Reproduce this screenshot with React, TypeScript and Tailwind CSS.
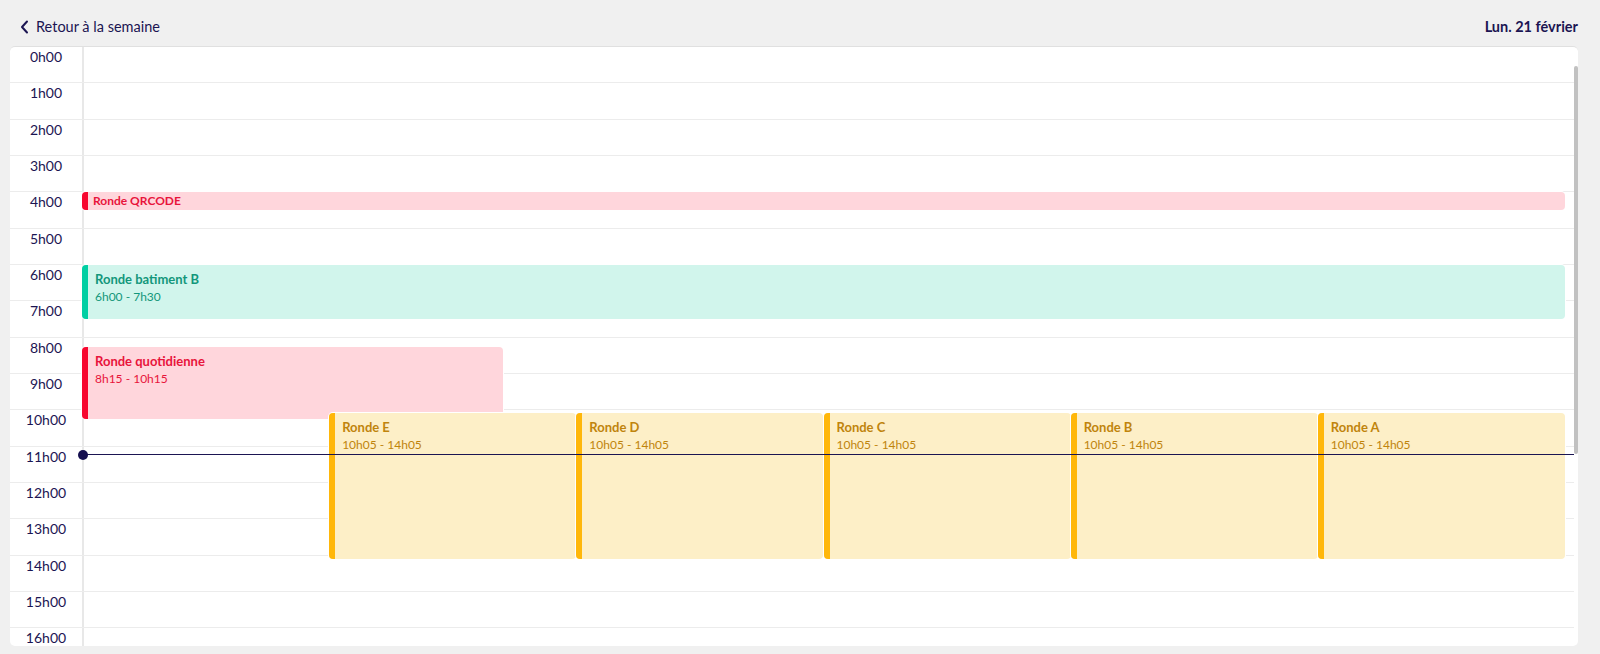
import React from "react";

const HOUR = 36.33;
const COLS = 1483;

type Tone = "red" | "teal" | "yellow";

type CalEvent = {
  title: string;
  time?: string;
  start: number;
  end: number;
  left: number;
  width: number;
  tone: Tone;
};

const toneClasses: Record<Tone, { box: string; bar: string; text: string }> = {
  red: { box: "bg-[#ffd6dc]", bar: "bg-[#f7072f]", text: "text-[#e8143b]" },
  teal: { box: "bg-[#d1f5ec]", bar: "bg-[#00cfa3]", text: "text-[#13977b]" },
  yellow: { box: "bg-[#fdefc7]", bar: "bg-[#ffb70a]", text: "text-[#c0840c]" },
};

const sixth = COLS / 6;

const events: CalEvent[] = [
  { title: "Ronde QRCODE", start: 4, end: 4.5, left: 0, width: COLS, tone: "red" },
  { title: "Ronde batiment B", time: "6h00 - 7h30", start: 6, end: 7.5, left: 0, width: COLS, tone: "teal" },
  { title: "Ronde quotidienne", time: "8h15 - 10h15", start: 8.25, end: 10.25, left: 0, width: 421, tone: "red" },
  { title: "Ronde E", time: "10h05 - 14h05", start: 10 + 5 / 60, end: 14 + 5 / 60, left: sixth * 1, width: sixth, tone: "yellow" },
  { title: "Ronde D", time: "10h05 - 14h05", start: 10 + 5 / 60, end: 14 + 5 / 60, left: sixth * 2, width: sixth, tone: "yellow" },
  { title: "Ronde C", time: "10h05 - 14h05", start: 10 + 5 / 60, end: 14 + 5 / 60, left: sixth * 3, width: sixth, tone: "yellow" },
  { title: "Ronde B", time: "10h05 - 14h05", start: 10 + 5 / 60, end: 14 + 5 / 60, left: sixth * 4, width: sixth, tone: "yellow" },
  { title: "Ronde A", time: "10h05 - 14h05", start: 10 + 5 / 60, end: 14 + 5 / 60, left: sixth * 5, width: sixth, tone: "yellow" },
];

const hours = Array.from({ length: 17 }, (_, i) => i);

function EventBlock({ ev }: { ev: CalEvent }) {
  const t = toneClasses[ev.tone];
  const compact = !ev.time;
  return (
    <div
      className={`absolute flex overflow-hidden rounded-[4px] ring-1 ring-white ${t.box}`}
      style={{
        top: ev.start * HOUR,
        height: (ev.end - ev.start) * HOUR,
        left: ev.left,
        width: ev.width,
      }}
    >
      <div className={`w-[6px] shrink-0 ${t.bar}`} />
      {compact ? (
        <div className={`flex items-center pl-[5px] text-[12px] font-bold leading-[18px] ${t.text}`}>
          {ev.title}
        </div>
      ) : (
        <div className={`flex flex-col pl-[7px] pt-[5px] text-[12px] leading-[18px] ${t.text}`}>
          <span className="text-[13px] font-bold">{ev.title}</span>
          <span>{ev.time}</span>
        </div>
      )}
    </div>
  );
}

export default function App() {
  return (
    <div className="h-[654px] w-full overflow-hidden bg-[#f0f0f0] pl-[10px] pr-[22px] font-['Lato',sans-serif] text-[#1b1552]">
      <header className="flex h-[46px] items-center justify-between pt-2">
        <button className="flex items-center gap-[7px] pl-[10px] text-[14.5px]">
          <svg width="9" height="14" viewBox="0 0 9 14" fill="none">
            <path d="M7 1.5 L2 7 L7 12.5" stroke="#1b1552" strokeWidth="2" strokeLinecap="round" strokeLinejoin="round" />
          </svg>
          <span>Retour à la semaine</span>
        </button>
        <span className="text-[14.5px] font-bold">Lun. 21 février</span>
      </header>

      <div className="relative h-[600px] overflow-hidden rounded-[5px] border-t border-[#e0e0e0] bg-white">
        <div className="flex">
          <div className="relative w-[1564px]">
            {hours.map((h) => (
              <div key={h} className="flex h-[36.33px] border-b border-[#ececec]">
                <div className="w-[72px] shrink-0 text-center text-[14px] leading-5">{h}h00</div>
                <div className="flex-1 border-l-2 border-[#e8e8e8]" />
              </div>
            ))}

            <div className="absolute left-[72px] top-0 w-[1483px]">
              {events.map((ev) => (
                <EventBlock key={ev.title} ev={ev} />
              ))}
            </div>

            {/* now indicator */}
            <div className="absolute left-[73px] right-0 top-[407px] h-px bg-[#1b1552]" />
            <div className="absolute left-[68px] top-[402.5px] h-[10px] w-[10px] rounded-full bg-[#150f50]" />
          </div>
          <div className="w-[4px]" />
        </div>

        {/* scrollbar thumb */}
        <div className="absolute right-0 top-[19px] h-[388px] w-[4px] rounded-[2px] bg-[#c1c1c1]" />
      </div>
    </div>
  );
}
